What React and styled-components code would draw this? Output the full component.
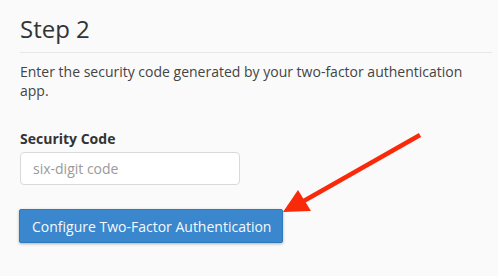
import React from 'react';
import styled, { createGlobalStyle } from 'styled-components';

const GlobalStyle = createGlobalStyle`
  html, body {
    margin: 0;
    padding: 0;
    background-color: #fafafa;
  }
  body {
    font-family: 'Open Sans', 'Noto Sans', sans-serif;
    color: #333;
  }
`;

const Page = styled.div`
  position: relative;
  width: 498px;
  height: 276px;
  padding: 12px 6px 0 20px;
  box-sizing: border-box;
  overflow: hidden;
`;
const Heading = styled.h2`
  margin: 0;
  font-size: 24px;
  font-weight: 400;
  line-height: 34px;
  color: #333;
  padding-bottom: 6px;
  border-bottom: 1px solid #e8e8e8;
`;
const Intro = styled.p`
  margin: 9px 0 0;
  font-size: 14px;
  line-height: 19px;
  color: #444;
  width: 460px;
`;
const Field = styled.div`
  display: flex;
  flex-direction: column;
  margin-top: 29px;
`;
const Label = styled.label`
  font-size: 14px;
  font-weight: 700;
  line-height: 20px;
  color: #333;
  margin-bottom: 3px;
`;
const CodeInput = styled.input`
  width: 220px;
  height: 33px;
  box-sizing: border-box;
  padding: 0 12px;
  border: 1px solid #d9d9d9;
  border-radius: 4px;
  background-color: white;
  font-family: inherit;
  font-size: 14px;
  color: #333;
  &::placeholder {
    color: #9a9a9a;
  }
  &:focus {
    outline: none;
  }
`;
const SubmitButton = styled.button`
  align-self: flex-start;
  margin: 24px 0 0 -1px;
  height: 34px;
  padding: 0 11px 0 12px;
  border: 1px solid #2f79bd;
  border-radius: 2px;
  background-color: #3a87cd;
  color: #f5f9fd;
  font-family: inherit;
  font-size: 14px;
  box-shadow: 0 1px 3px rgba(0, 0, 0, 0.3);
  cursor: pointer;
`;
const Arrow = styled.svg`
  position: absolute;
  left: 0;
  top: 0;
  pointer-events: none;
`;

const App = () => {
  return (
    <>
      <GlobalStyle />
      <Page>
        <Heading>Step 2</Heading>
        <Intro>Enter the security code generated by your two-factor authentication app.</Intro>
        <Field>
          <Label>Security Code</Label>
          <CodeInput type="text" placeholder="six-digit code" />
          <SubmitButton>Configure Two-Factor Authentication</SubmitButton>
        </Field>
        <Arrow width="498" height="276" viewBox="0 0 498 276">
          <line x1="420" y1="135" x2="302" y2="202" stroke="#f92a0a" strokeWidth="4.5" />
          <polygon points="283,212 298,190 311,211" fill="#f92a0a" />
        </Arrow>
      </Page>
    </>
  );
};

export default App;
